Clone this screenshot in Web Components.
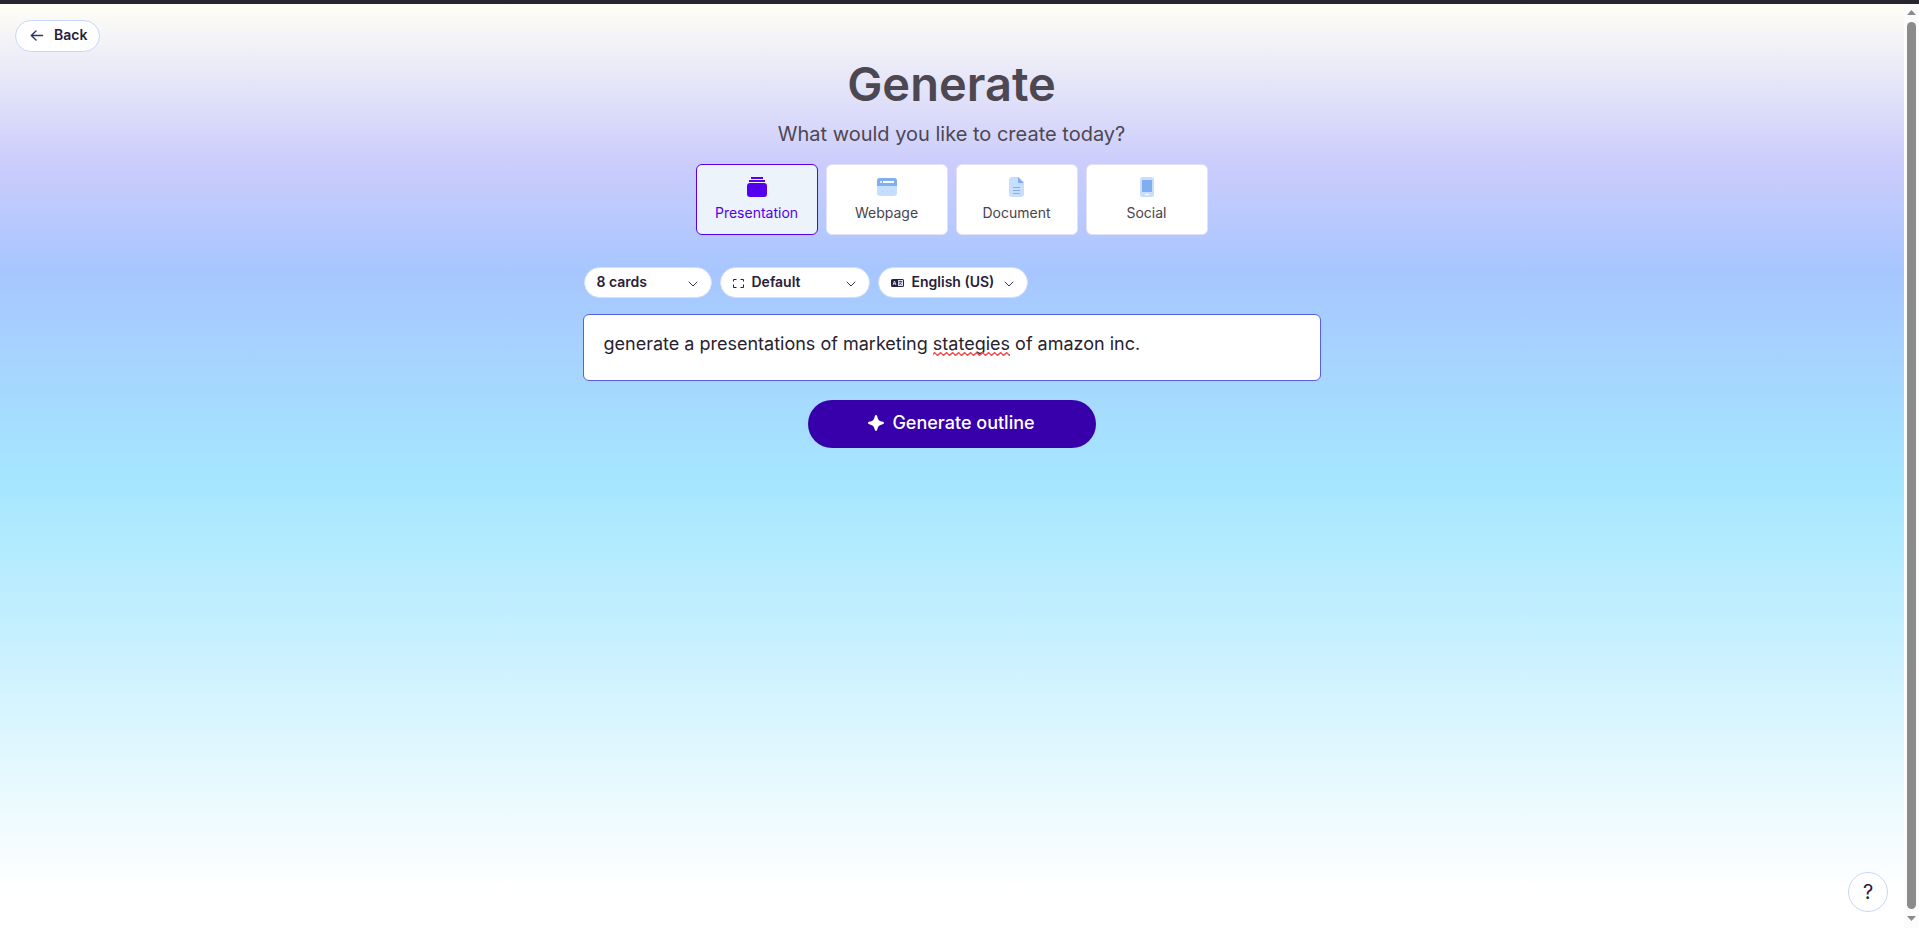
<!DOCTYPE html>
<html lang="en">
<head>
<meta charset="utf-8">
<meta name="viewport" content="width=device-width, initial-scale=1">
<title>Generate</title>
<style>
html, body { height: 100%; margin: 0; }
body { font-family: Inter, "Liberation Sans", sans-serif; color: #27222f; overflow: hidden; }
</style>
</head>
<body>
<generate-app></generate-app>
<script>
class BaseElement extends HTMLElement {
  render(css, html) {
    this.attachShadow({ mode: 'open' }).innerHTML =
      `<style>*{box-sizing:border-box}${css}</style>${html}`;
  }
}

class BackButton extends BaseElement {
  connectedCallback() {
    this.render(`
      :host{display:block}
      button{display:flex;align-items:center;gap:10px;height:32px;padding:0 12px 2px 14px;border:1px solid #c9d6fb;border-radius:16px;background:#fff;color:#27203c;font-family:inherit;font-size:14px;font-weight:600;line-height:20px;cursor:pointer}
      svg{display:block;width:14px;height:14px}
    `, `<button type="button"><svg viewBox="0 0 14 14" fill="none" stroke="#2f3560" stroke-width="1.4" stroke-linecap="round" stroke-linejoin="round" aria-hidden="true"><path d="M12.500 7.500H1.500M6 3 1.300 7.500 6 12"/></svg><slot></slot></button>`);
  }
}
customElements.define('back-button', BackButton);

class TypePicker extends BaseElement {
  connectedCallback() {
    const types = [
      ['Presentation', '<g fill="#5400ee"><rect x="4" y="0" width="12" height="2"/><rect x="2" y="3" width="16" height="2"/><rect y="6" width="20" height="14" rx="3"/></g>'],
      ['Webpage', '<rect y="1" width="20" height="18" rx="3" fill="#c5deff"/><path d="M0 9V4a3 3 0 0 1 3-3h14a3 3 0 0 1 3 3v5z" fill="#7fafef"/><rect x="3" y="4" width="2" height="2" rx="1" fill="#fff"/><rect x="6" y="4" width="11" height="2" fill="#fff"/><path d="M5 14.500h1M10 14.500h1M15 14.500h1" stroke="#a8cbf7"/>'],
      ['Document', '<path d="M5 0h7l5 6v11a3 3 0 0 1-3 3H5a3 3 0 0 1-3-3V3a3 3 0 0 1 3-3z" fill="#c8deff"/><path d="M11 0l6 6h-6z" fill="#7fafef"/><path d="M6 10.500h7M6 13.500h7M6 16.500h7" stroke="#7fafef"/>'],
      ['Social', '<rect x="3" width="14" height="20" rx="2.500" fill="#c8deff"/><rect x="5" y="3" width="10" height="12" fill="#7fafef"/><rect x="8" y="17" width="4" height="1" fill="#fff"/>']
    ];
    this.render(`
      :host{display:block}
      fieldset{display:flex;flex-wrap:wrap;justify-content:center;gap:8px;margin:0;padding:0;border:0}
      label{position:relative;display:flex;flex-direction:column;align-items:center;gap:6px;width:122px;height:71px;padding-top:12px;border:1px solid #e3e1f8;border-radius:6px;background:#fff;color:#48434c;font-size:14px;line-height:20px;cursor:pointer}
      label:has(:checked){border-color:#5400ee;background:#ecf3fb;color:#5400ee}
      input{position:absolute;opacity:0;inset:0;width:100%;height:100%;margin:0}
      svg{display:block;width:20px;height:20px}
    `, `<fieldset aria-label="Content type">${types.map(([name, icon], i) =>
      `<label><input type="radio" name="type" value="${name}"${i ? '' : ' checked'}><svg viewBox="0 0 20 20" aria-hidden="true">${icon}</svg><span>${name}</span></label>`).join('')}</fieldset>`);
  }
}
customElements.define('type-picker', TypePicker);

class PillSelect extends BaseElement {
  connectedCallback() {
    const options = this.getAttribute('options').split('|');
    this.render(`
      :host{display:block;width:150px}
      :host([small]){width:128px}
      label{display:grid;grid-template-columns:auto 1fr 11px;align-items:center;height:31px;padding:0 12px;border:1px solid #d5def9;border-radius:16px;background:#fff}
      ::slotted(svg){display:block;margin-right:8px}
      select{grid-column:2/4;grid-row:1;width:100%;min-width:0;padding:0 0 2px;border:0;appearance:none;background:none;color:#27203c;font-family:inherit;font-size:14px;font-weight:600;line-height:20px;outline:0}
      .chevron{grid-column:3;grid-row:1;width:10px;height:10px;pointer-events:none}
    `, `<label><slot></slot><select aria-label="${this.getAttribute('name')}">${options.map(o => `<option>${o}</option>`).join('')}</select><svg class="chevron" viewBox="0 0 10 10" fill="none" stroke="#3b3754" stroke-linecap="round" stroke-linejoin="round" aria-hidden="true"><path d="M1 4 5 8 9 4"/></svg></label>`);
  }
}
customElements.define('pill-select', PillSelect);

class PromptBox extends BaseElement {
  connectedCallback() {
    this.render(`
      :host{display:block;position:relative;font-size:18px}
      textarea{display:block;width:100%;height:67px;padding:17px 20px;border:1px solid #555fe8;border-radius:6px;outline:0;resize:none;background:#fff;color:#27222f;font-family:inherit;font-size:18px;line-height:24px;overflow:hidden}
      svg{position:absolute;top:38px;height:4px;pointer-events:none}
    `, `<textarea aria-label="Prompt" spellcheck="false" rows="1"></textarea>
      <svg aria-hidden="true"><defs><pattern id="wave" width="6" height="4" patternUnits="userSpaceOnUse"><path d="M-1.500 4 1.500 .5 4.500 3.500 7.500 .5" fill="none" stroke="#f05050" stroke-width="1.400"/></pattern></defs><rect width="100%" height="4" fill="url(#wave)"/></svg>`);
    const area = this.shadowRoot.querySelector('textarea');
    const wave = this.shadowRoot.querySelector('svg');
    const word = this.getAttribute('misspelt');
    area.value = this.getAttribute('value');
    const pen = document.createElement('canvas').getContext('2d');
    const mark = () => {
      const at = area.value.indexOf(word);
      wave.style.display = at < 0 ? 'none' : 'block';
      const style = getComputedStyle(area);
      pen.font = `${style.fontSize} ${style.fontFamily}`;
      wave.style.left = Math.round(21 + pen.measureText(area.value.slice(0, at)).width) + 'px';
      wave.style.width = Math.round(pen.measureText(word).width) + 'px';
    };
    area.addEventListener('input', mark);
    mark();
  }
}
customElements.define('prompt-box', PromptBox);

class PrimaryButton extends BaseElement {
  connectedCallback() {
    this.render(`
      :host{display:block}
      button{display:flex;align-items:center;justify-content:center;gap:8px;width:288px;height:48px;padding:0 0 2px;border:0;border-radius:24px;background:#3700ab;color:#fff;font-family:inherit;font-size:18px;font-weight:500;line-height:24px;cursor:pointer}
      svg{width:16px;height:16px}
    `, `<button type="button"><svg viewBox="0 0 16 16" fill="#fff" aria-hidden="true"><path d="M8 0C8.700 0 9 .5 9.400 1.900c.8 3 1.700 3.900 4.700 4.700C15.500 7 16 7.300 16 8s-.5 1-1.900 1.400c-3 .8-3.900 1.700-4.700 4.700C9 15.500 8.700 16 8 16s-1-.5-1.400-1.900c-.8-3-1.700-3.900-4.700-4.700C.5 9 0 8.700 0 8s.5-1 1.900-1.400c3-.8 3.900-1.700 4.700-4.700C7 .5 7.300 0 8 0z"/></svg><slot></slot></button>`);
  }
}
customElements.define('primary-button', PrimaryButton);

class HelpButton extends BaseElement {
  connectedCallback() {
    this.render(`
      :host{display:block}
      button{width:40px;height:40px;padding:0;border:1px solid #c9d6fb;border-radius:50%;background:#fff;color:#27203c;font-family:inherit;font-size:20px;font-weight:400;line-height:24px;cursor:pointer}
    `, `<button type="button" aria-label="Help">?</button>`);
  }
}
customElements.define('help-button', HelpButton);

class ScrollRail extends BaseElement {
  connectedCallback() {
    this.render(`
      :host{display:flex;flex-direction:column;align-items:center;gap:7px;width:15px;padding:6px 0 7px;background:#fcfcfc}
      .thumb{flex:1;width:9px;border-radius:5px;background:#8b8b8b}
      svg{display:block;width:9px;height:5px;fill:#8b8b8b}
    `, `<svg viewBox="0 0 9 5"><path d="M0 5 4.500 0 9 5z"/></svg><div class="thumb"></div><svg viewBox="0 0 9 5"><path d="M0 0 4.500 5 9 0z"/></svg>`);
  }
}
customElements.define('scroll-rail', ScrollRail);

class GenerateApp extends BaseElement {
  connectedCallback() {
    this.render(`
      :host{display:grid;grid-template:4px 1fr/1fr auto;height:100vh}
      .strip{grid-column:1/3;background:#29252e}
      .page{display:flex;flex-direction:column;padding:16px 16px 16px 15px;min-width:0;background:linear-gradient(#fffef5 0%,#cccdfc 17%,#a7c6ff 29%,#a5e7fe 52%,#fff 96%)}
      header,footer{display:flex}
      main{flex:1;display:flex;flex-direction:column;align-items:center;width:100%}
      footer{justify-content:flex-end}
      h1{margin:4px 0 0;color:#4d4752;font-size:47px;font-weight:600;line-height:56px}
      p{margin:8px 0 0;color:#4d4752;font-size:20px;line-height:28px}
      type-picker{margin-top:16px}
      .form{width:100%;max-width:738px;margin-top:32px}
      .options{display:flex;flex-wrap:wrap;gap:8px;padding-left:1px}
      prompt-box{margin-top:16px}
      primary-button{margin-top:19px}
    `, `
      <div class="strip"></div>
      <div class="page">
        <header><back-button>Back</back-button></header>
        <main>
          <h1>Generate</h1>
          <p>What would you like to create today?</p>
          <type-picker></type-picker>
          <div class="form">
            <div class="options">
              <pill-select small name="Number of cards" options="8 cards|10 cards|12 cards"></pill-select>
              <pill-select name="Page format" options="Default|Traditional|Tall"><svg width="11" height="10" viewBox="0 0 11 10" fill="none" stroke="#27203c" aria-hidden="true"><path d="M.5 3.500V1.500H3.500M7.500 1.500h3V3.500M10.500 6.500v3H7.500M3.500 9.500H.5V6.500"/></svg></pill-select>
              <pill-select name="Language" options="English (US)|English (UK)|French"><svg width="13" height="10" viewBox="0 0 13 10" aria-hidden="true"><path d="M1.500 1h10A1.500 1.500 0 0 1 13 2.500v5A1.500 1.500 0 0 1 11.500 9h-10A1.500 1.500 0 0 1 0 7.500v-5A1.500 1.500 0 0 1 1.500 1z" fill="#27203c"/><path d="M7 2h5v6H7z" fill="#dce3fa"/><path d="M7.800 3.500H11.200M9.500 2.800v.7M8 7l2.500-3M8.300 4.500 10.800 7" fill="none" stroke="#27203c" stroke-width=".7"/><path d="M2 7l1.500-4L5 7M2.500 5.800h2" fill="none" stroke="#fff" stroke-width=".8"/></svg></pill-select>
            </div>
            <prompt-box value="generate a presentations of marketing stategies of amazon inc." misspelt="stategies"></prompt-box>
          </div>
          <primary-button>Generate outline</primary-button>
        </main>
        <footer><help-button></help-button></footer>
      </div>
      <scroll-rail aria-hidden="true"></scroll-rail>`);
  }
}
customElements.define('generate-app', GenerateApp);
</script>
</body>
</html>
